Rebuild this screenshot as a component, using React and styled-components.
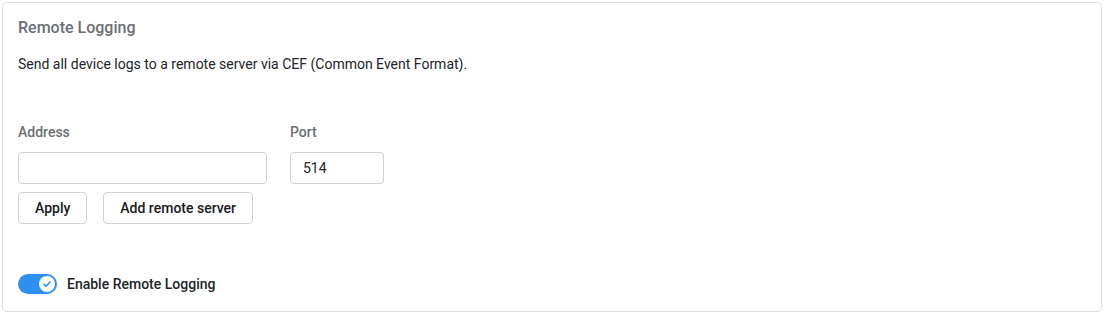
import styled, { createGlobalStyle } from 'styled-components';

const Global = createGlobalStyle`
  body {
    margin: 0;
    background: #fff;
    font-family: Roboto, "Liberation Sans", sans-serif;
  }
`;

const Card = styled.section`
  box-sizing: border-box;
  margin: 2px;
  width: 1100px;
  height: 310px;
  border: 1px solid #dcdcdc;
  border-radius: 5px;
  padding: 15px 15px 17px;
  display: flex;
  flex-direction: column;
`;

const Title = styled.h2`
  margin: 0;
  font-size: 16px;
  line-height: 20px;
  font-weight: 500;
  color: #6b6f76;
`;

const Text = styled.p`
  margin: 16px 0 0;
  font-size: 14px;
  line-height: 20px;
  color: #212529;
`;

const Fields = styled.div`
  display: flex;
  gap: 23px;
  margin-top: 48px;
`;

const Field = styled.div`
  display: flex;
  flex-direction: column;
  gap: 10px;
`;

const Label = styled.label`
  font-size: 14px;
  line-height: 20px;
  font-weight: 500;
  color: #6b6f76;
`;

const Input = styled.input`
  box-sizing: border-box;
  width: ${(p) => p.$width}px;
  height: 32px;
  border: 1px solid #cfd2d6;
  border-radius: 4px;
  padding: 0 12px;
  font-family: inherit;
  font-size: 14px;
  color: #212529;
  outline: none;
`;

const Actions = styled.div`
  display: flex;
  gap: 16px;
  margin-top: 8px;
`;

const Button = styled.button`
  box-sizing: border-box;
  height: 32px;
  padding: 0 16px;
  background: #fff;
  border: 1px solid #cfd2d6;
  border-radius: 4px;
  font-family: inherit;
  font-size: 14px;
  font-weight: 500;
  color: #16191d;
`;

const ToggleRow = styled.div`
  display: flex;
  align-items: center;
  gap: 10px;
  margin-top: auto;
  font-size: 14px;
  font-weight: 500;
  color: #212529;
`;

const Switch = styled.span`
  box-sizing: border-box;
  width: 39px;
  height: 20px;
  border-radius: 10px;
  background: #2d8ff0;
  padding: 2px;
  display: flex;
  justify-content: flex-end;
`;

const Knob = styled.span`
  width: 16px;
  height: 16px;
  border-radius: 50%;
  background: #fff;
  display: flex;
  align-items: center;
  justify-content: center;
`;

export default () => (
  <>
    <Global />
    <Card>
      <Title>Remote Logging</Title>
      <Text>Send all device logs to a remote server via CEF (Common Event Format).</Text>
      <Fields>
        <Field>
          <Label>Address</Label>
          <Input $width={249} defaultValue="" />
        </Field>
        <Field>
          <Label>Port</Label>
          <Input $width={94} defaultValue="514" />
        </Field>
      </Fields>
      <Actions>
        <Button>Apply</Button>
        <Button>Add remote server</Button>
      </Actions>
      <ToggleRow>
        <Switch>
          <Knob>
            <svg width="10" height="10" viewBox="0 0 10 10">
              <path d="M2 5.2l2 2 4-4.2" fill="none" stroke="#2d8ff0" strokeWidth="1.6" strokeLinecap="round" strokeLinejoin="round" />
            </svg>
          </Knob>
        </Switch>
        Enable Remote Logging
      </ToggleRow>
    </Card>
  </>
);
